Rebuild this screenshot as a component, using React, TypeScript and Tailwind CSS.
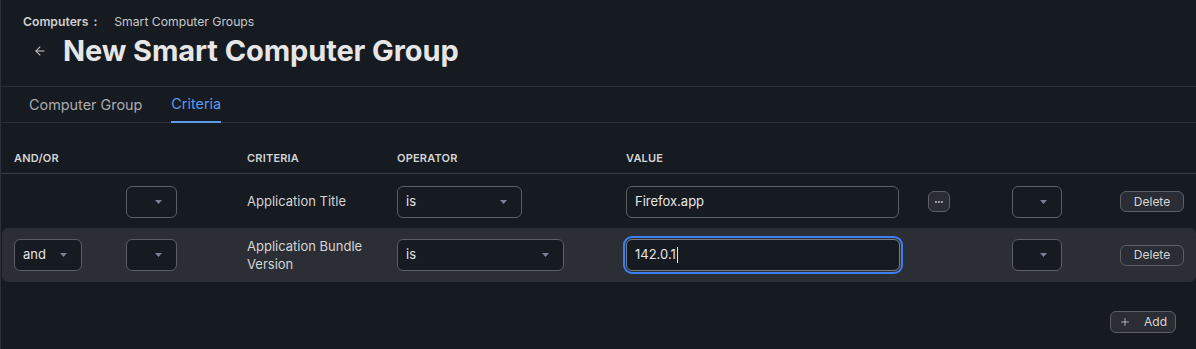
import { ArrowLeft, Plus } from 'lucide-react';

const cols = 'grid grid-cols-[112px_121px_150px_229px_302px_84px_108px_1fr] items-center';

function Caret() {
  return (
    <svg width="7" height="4" viewBox="0 0 7 4" className="shrink-0">
      <path d="M0 0h7L3.5 4z" fill="#7b8296" />
    </svg>
  );
}

function Select({ value, width }: { value?: string; width: string }) {
  return (
    <div
      className={`${width} h-8 flex items-center justify-between pl-2 pr-[14px] rounded-md border border-[#5b5e64] bg-[#161a21] text-[13px] text-[#e4e4e4]`}
    >
      <span>{value ?? ''}</span>
      <Caret />
    </div>
  );
}

function SmallButton({ children, className = '' }: { children: React.ReactNode; className?: string }) {
  return (
    <button
      className={`h-[21px] flex items-center justify-center rounded-md border border-[#5b5e64] bg-[#2a2d33] text-[12px] text-[#d6d6d6] ${className}`}
    >
      {children}
    </button>
  );
}

export default function App() {
  return (
    <div
      className="w-[1196px] h-[349px] bg-[#161a21] border-l border-[#2c3038] text-[#e4e4e4] overflow-hidden"
      style={{ fontFamily: 'Inter, "Noto Sans", sans-serif' }}
    >
      {/* header */}
      <div className="pl-[22px] pt-[14px] h-[87px] border-b border-[#2c3038]">
        <div className="flex items-center text-[12.2px] leading-4">
          <span className="font-semibold text-[#cfcfcf]">Computers</span>
          <span className="font-semibold text-[#cfcfcf] ml-[5px]">:</span>
          <span className="ml-[17px] text-[#c8c8c8]">Smart Computer Groups</span>
        </div>
        <div className="flex items-center mt-[3px] ml-[10px]">
          <ArrowLeft className="w-[14px] h-[14px] text-[#cfcfcf]" strokeWidth={1.75} />
          <h1 className="ml-[16px] text-[29px] font-bold leading-9 text-[#e6e6e6] tracking-[-0.1px]">
            New Smart Computer Group
          </h1>
        </div>
      </div>

      {/* tabs */}
      <div className="flex h-[36px] pl-[28px] gap-[29px] border-b border-[#2c3038] text-[14.4px]">
        <div className="flex items-center text-[#a9abaf]">Computer Group</div>
        <div className="flex items-center text-[#5b9bea] border-b-2 border-[#5b9bea] -mb-px">Criteria</div>
      </div>

      {/* table header */}
      <div className={`${cols} pl-[13px] h-[51px] pt-[20px] border-b border-[#3a3d44] text-[11px] font-semibold text-[#d4d4d4] tracking-[0.2px]`}>
        <div>AND/OR</div>
        <div />
        <div>CRITERIA</div>
        <div>OPERATOR</div>
        <div>VALUE</div>
      </div>

      {/* row 1 */}
      <div className={`${cols} pl-[13px] h-[54px] pt-px text-[13px]`}>
        <div />
        <Select width="w-[51px]" />
        <div className="text-[#d4d4d4]">Application Title</div>
        <Select value="is" width="w-[125px]" />
        <div className="w-[273px] h-8 flex items-center px-2 rounded-md border border-[#5b5e64] bg-[#161a21] text-[#e6e6e6]">
          Firefox.app
        </div>
        <SmallButton className="w-[22px]">
          <svg width="8" height="2" viewBox="0 0 8 2">
            <circle cx="1" cy="1" r="0.9" fill="#d6d6d6" />
            <circle cx="4" cy="1" r="0.9" fill="#d6d6d6" />
            <circle cx="7" cy="1" r="0.9" fill="#d6d6d6" />
          </svg>
        </SmallButton>
        <Select width="w-[50px]" />
        <SmallButton className="w-[64px]">Delete</SmallButton>
      </div>

      {/* row 2 */}
      <div className={`${cols} pl-[12px] h-[54px] text-[13px] bg-[#2b2e35] rounded-md ml-px`}>
        <Select value="and" width="w-[68px]" />
        <Select width="w-[51px]" />
        <div className="text-[#d4d4d4] leading-[18px]">
          Application Bundle
          <br />
          Version
        </div>
        <Select value="is" width="w-[167px]" />
        <div className="w-[274px] h-8 flex items-center px-2 rounded-md border border-[#7a7d83] bg-[#161a21] text-[#e6e6e6] ring-2 ring-[#3d7ef0] ring-offset-1 ring-offset-[#2b2e35]">
          142.0.1
          <span className="w-px h-[16px] bg-[#e6e6e6] ml-px" />
        </div>
        <div />
        <Select width="w-[50px]" />
        <SmallButton className="w-[64px]">Delete</SmallButton>
      </div>

      {/* add */}
      <div className="flex justify-end pr-[20px] pt-[29px]">
        <SmallButton className="w-[66px] h-[22px] gap-[13px]">
          <Plus className="w-[12px] h-[12px]" strokeWidth={1.5} />
          Add
        </SmallButton>
      </div>
    </div>
  );
}
